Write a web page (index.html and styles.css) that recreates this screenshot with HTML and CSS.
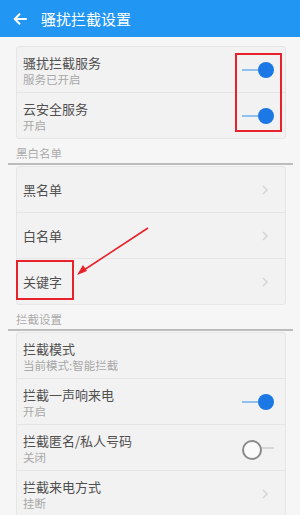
FILE: index.html
```html
<!DOCTYPE html>
<html lang="zh">
<head>
<meta charset="utf-8">
<link rel="stylesheet" href="styles.css">
</head>
<body>
<div class="page">
  <header class="topbar">
    <svg class="back" width="14" height="12" viewBox="0 0 14 12"><path d="M13 6H2M6.5 1.2L1.7 6l4.8 4.8" fill="none" stroke="#fff" stroke-width="2" stroke-linecap="round" stroke-linejoin="round"/></svg>
    <span class="title">骚扰拦截设置</span>
  </header>
  <main class="content">
    <section class="card">
      <div class="row two">
        <div class="texts"><div class="t">骚扰拦截服务</div><div class="s">服务已开启</div></div>
        <span class="toggle on"></span>
      </div>
      <div class="row two">
        <div class="texts"><div class="t">云安全服务</div><div class="s">开启</div></div>
        <span class="toggle on"></span>
      </div>
    </section>
    <div class="sect">黑白名单</div>
    <section class="card">
      <div class="row one"><div class="t">黑名单</div><svg class="chev" width="6" height="10" viewBox="0 0 6 10"><path d="M1 1l4 4-4 4" fill="none" stroke="#d2d2d2" stroke-width="1.4"/></svg></div>
      <div class="row one"><div class="t">白名单</div><svg class="chev" width="6" height="10" viewBox="0 0 6 10"><path d="M1 1l4 4-4 4" fill="none" stroke="#d2d2d2" stroke-width="1.4"/></svg></div>
      <div class="row one"><div class="t">关键字</div><svg class="chev" width="6" height="10" viewBox="0 0 6 10"><path d="M1 1l4 4-4 4" fill="none" stroke="#d2d2d2" stroke-width="1.4"/></svg></div>
    </section>
    <div class="sect">拦截设置</div>
    <section class="card">
      <div class="row two">
        <div class="texts"><div class="t">拦截模式</div><div class="s">当前模式:智能拦截</div></div>
      </div>
      <div class="row two">
        <div class="texts"><div class="t">拦截一声响来电</div><div class="s">开启</div></div>
        <span class="toggle on"></span>
      </div>
      <div class="row two">
        <div class="texts"><div class="t">拦截匿名/私人号码</div><div class="s">关闭</div></div>
        <span class="toggle off"></span>
      </div>
      <div class="row two">
        <div class="texts"><div class="t">拦截来电方式</div><div class="s">挂断</div></div>
        <svg class="chev" width="6" height="10" viewBox="0 0 6 10"><path d="M1 1l4 4-4 4" fill="none" stroke="#d2d2d2" stroke-width="1.4"/></svg>
      </div>
    </section>
  </main>
  <div class="mark mark-a"></div>
  <div class="mark mark-b"></div>
  <svg class="arrow" width="300" height="515" viewBox="0 0 300 515"><line x1="148" y1="228" x2="84" y2="270" stroke="#e8222a" stroke-width="1.6"/><path d="M77 275l6-10 4 6z" fill="#e8222a"/></svg>
</div>
</body>
</html>
```
FILE: styles.css
```css
* { box-sizing: border-box; }
html, body { margin: 0; padding: 0; }
body {
  width: 300px;
  height: 515px;
  overflow: hidden;
  background: #f6f6f6;
  font-family: "Noto Sans CJK SC", "Noto Sans", sans-serif;
}
.page { position: relative; width: 300px; height: 515px; }
.topbar {
  height: 37px;
  background: #2196f3;
  display: flex;
  align-items: center;
  padding-left: 13px;
  gap: 14px;
}
.back { display: block; }
.title { color: #fff; font-size: 15px; line-height: 1; margin-top: -1px; }
.content { padding-top: 9px; }
.card {
  margin: 0 14px 0 16px;
  background: #f2f2f2;
  border: 1px solid #e6e6e6;
  border-radius: 3px;
}
.row {
  display: flex;
  align-items: center;
  justify-content: space-between;
  padding: 0 11px 0 6px;
  border-top: 1px solid #e5e5e5;
  height: 46px;
}
.row:first-child { border-top: none; height: 45px; }
.texts { display: flex; flex-direction: column; padding-top: 1px; }
.t { font-size: 13px; color: #505050; line-height: 19px; }
.s { font-size: 11.5px; color: #a8a8a8; line-height: 16px; margin-top: -1px; }
.chev { margin-right: 6px; }
.toggle { position: relative; width: 32px; height: 16px; display: block; }
.toggle::before, .toggle::after { content: ""; position: absolute; }
.toggle.on::before { left: 0; top: 7px; width: 20px; height: 2px; background: #8fc0f2; }
.toggle.on::after { right: 0; top: 0; width: 16px; height: 16px; border-radius: 50%; background: #1b78e4; }
.toggle.off::before { right: 0; top: 7px; width: 16px; height: 2px; background: #d6d6d6; }
.toggle.off::after { left: 0; top: 0; width: 16px; height: 16px; border-radius: 50%; background: #fafafa; border: 2px solid #8a8a8a; }
.sect {
  margin: 0 7px 1px 8px;
  padding: 6px 0 0 8px;
  height: 26px;
  font-size: 11.5px;
  color: #ababab;
  line-height: 16px;
  border-bottom: 2px solid #bdbdbd;
}
.mark { position: absolute; border: 2px solid #e8222a; }
.mark-a { left: 235px; top: 53px; width: 47px; height: 79px; }
.mark-b { left: 16px; top: 260px; width: 58px; height: 40px; }
.arrow { position: absolute; left: 0; top: 0; pointer-events: none; }
```
